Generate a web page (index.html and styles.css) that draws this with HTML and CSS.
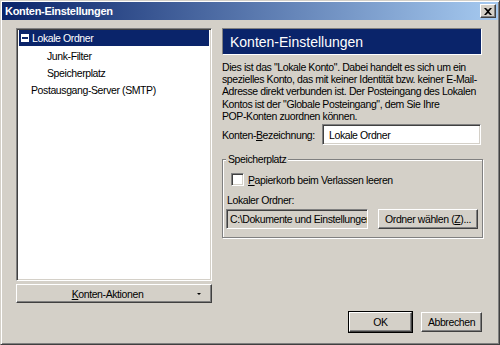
FILE: index.html
```html
<!DOCTYPE html>
<html lang="de">

<head>
    <meta charset="UTF-8">
    <title>Konten-Einstellungen</title>
    <link rel="stylesheet" href="styles.css">
</head>

<body>
    <div class="window">
        <div class="titlebar">
            <span class="title">Konten-Einstellungen</span>
            <span class="close-btn">
                <svg width="8" height="7" viewBox="0 0 8 7">
                    <path d="M0 0h2l2 2 2-2h2L5 3.5 8 7H6L4 5 2 7H0l3-3.5z" fill="#000"/>
                </svg>
            </span>
        </div>
        <div class="main">
            <div class="left-col">
                <div class="tree">
                    <div class="tree-row selected">
                        <span class="toggle"></span>
                        <span class="row-label">Lokale Ordner</span>
                    </div>
                    <div class="tree-row child">Junk-Filter</div>
                    <div class="tree-row child">Speicherplatz</div>
                    <div class="tree-row top">Postausgang-Server (SMTP)</div>
                </div>
                <button class="btn actions-btn">
                    <span class="actions-text"><u>K</u>onten-Aktionen</span>
                    <span class="arrow"></span>
                </button>
            </div>
            <div class="right-col">
                <div class="page-header">Konten-Einstellungen</div>
                <p class="description">
                    Dies ist das "Lokale Konto". Dabei handelt es sich um ein<br>
                    spezielles Konto, das mit keiner Identität bzw. keiner E-Mail-<br>
                    Adresse direkt verbunden ist. Der Posteingang des Lokalen<br>
                    Kontos ist der "Globale Posteingang", dem Sie Ihre<br>
                    POP-Konten zuordnen können.
                </p>
                <div class="name-row">
                    <label class="name-label">Konten-<u>B</u>ezeichnung:</label>
                    <div class="textbox">Lokale Ordner</div>
                </div>
                <fieldset class="group">
                    <legend>Speicherplatz</legend>
                    <div class="check-row">
                        <span class="checkbox"></span>
                        <span><u>P</u>apierkorb beim Verlassen leeren</span>
                    </div>
                    <div class="folder-label">Lokaler Ordner:</div>
                    <div class="folder-row">
                        <div class="path-field">C:\Dokumente und Einstellungen\Benutzer</div>
                        <button class="btn folder-btn">Ordner wählen (<u>Z</u>)...</button>
                    </div>
                </fieldset>
                <div class="dialog-buttons">
                    <button class="btn ok-btn">OK</button>
                    <button class="btn cancel-btn">Abbrechen</button>
                </div>
            </div>
        </div>
    </div>
</body>

</html>
```

FILE: styles.css
```css
body {
    margin: 0;
    font-family: "Liberation Sans", Arial, sans-serif;
    font-size: 10.5px;
    letter-spacing: -0.4px;
    color: #000;
    background: #d4d0c8;
}

.window {
    width: 500px;
    height: 345px;
    box-sizing: border-box;
    background: #d4d0c8;
    border: 1px solid #d4d0c8;
    border-right-color: #404040;
    border-bottom-color: #404040;
    box-shadow: inset 1px 1px #fff, inset -1px -1px #808080;
}

.titlebar {
    margin: 1px;
    height: 18px;
    display: flex;
    align-items: center;
    justify-content: space-between;
    padding: 0 2px 0 3px;
    background: linear-gradient(to right, #0a246a, #a6caf0);
}

.title {
    color: #fff;
    font-weight: bold;
    font-size: 11px;
    letter-spacing: -0.3px;
}

.close-btn {
    width: 16px;
    height: 14px;
    box-sizing: border-box;
    display: flex;
    align-items: center;
    justify-content: center;
    background: #d4d0c8;
    border: 1px solid #fff;
    border-right-color: #404040;
    border-bottom-color: #404040;
    box-shadow: inset -1px -1px #808080;
}

.main {
    display: flex;
    padding: 7px 0 0 15px;
}

.left-col {
    width: 196px;
    display: flex;
    flex-direction: column;
}

.tree {
    height: 253px;
    box-sizing: border-box;
    background: #fff;
    border: 1px solid #808080;
    border-right-color: #fff;
    border-bottom-color: #fff;
    box-shadow: inset 1px 1px #404040, inset -1px -1px #d4d0c8;
    padding: 1px 2px 0 2px;
}

.tree-row {
    height: 17px;
    display: flex;
    align-items: center;
    white-space: nowrap;
}

.tree-row.selected {
    background: #0a246a;
    color: #fff;
    height: 16px;
    margin-bottom: 1px;
}

.tree-row.child {
    padding-left: 28px;
}

.tree-row.top {
    padding-left: 12px;
}

.toggle {
    width: 8px;
    height: 8px;
    box-sizing: border-box;
    margin: 0 3px 0 2px;
    background: #fff;
    position: relative;
}

.toggle::after {
    content: "";
    position: absolute;
    left: 1px;
    top: 3px;
    width: 6px;
    height: 2px;
    background: #0a246a;
}

.btn {
    font-family: "Liberation Sans", Arial, sans-serif;
    font-size: 10.5px;
    letter-spacing: -0.4px;
    color: #000;
    background: #d4d0c8;
    border: 1px solid #fff;
    border-right-color: #404040;
    border-bottom-color: #404040;
    box-shadow: inset -1px -1px #808080;
    padding: 0;
    height: 20px;
    white-space: nowrap;
}

.actions-btn {
    margin-top: 3px;
    height: 19px;
    display: flex;
    align-items: center;
}

.actions-text {
    flex: 1;
    text-align: center;
    padding-left: 1px;
}

.arrow {
    width: 0;
    height: 0;
    margin-right: 10px;
    border-left: 2px solid transparent;
    border-right: 2px solid transparent;
    border-top: 2px solid #000;
}

.right-col {
    width: 261px;
    height: 304px;
    margin-left: 10px;
    display: flex;
    flex-direction: column;
}

.page-header {
    width: 260px;
    height: 27px;
    box-sizing: border-box;
    background: #0a246a;
    color: #fff;
    font-size: 14px;
    letter-spacing: 0;
    padding: 0 7px;
    display: flex;
    align-items: center;
    border: 1px solid #808080;
    border-right-color: #fff;
    border-bottom-color: #fff;
}

.description {
    margin: 6px 0 0;
    line-height: 12.2px;
    white-space: nowrap;
}

.name-row {
    display: flex;
    align-items: center;
    margin-top: 2px;
    white-space: nowrap;
}

.name-label {
    width: 100px;
}

.textbox {
    width: 159px;
    height: 21px;
    box-sizing: border-box;
    background: #fff;
    border: 1px solid #808080;
    border-right-color: #fff;
    border-bottom-color: #fff;
    box-shadow: inset 1px 1px #404040, inset -1px -1px #d4d0c8;
    padding: 0 6px;
    display: flex;
    align-items: center;
}

.group {
    margin: 8px 0 0;
    padding: 0 4px 8px 3px;
    width: 261px;
    box-sizing: border-box;
    border: 1px solid #808080;
    box-shadow: inset 1px 1px #fff, 1px 1px #fff;
}

.group legend {
    padding: 0 2px;
    margin-left: 0;
    background: #d4d0c8;
    line-height: 12px;
}

.check-row {
    display: flex;
    align-items: center;
    gap: 4px;
    margin: 8px 0 0 5px;
    white-space: nowrap;
}

.checkbox {
    width: 13px;
    height: 13px;
    box-sizing: border-box;
    background: #fff;
    border: 1px solid #808080;
    border-right-color: #fff;
    border-bottom-color: #fff;
    box-shadow: inset 1px 1px #404040, inset -1px -1px #d4d0c8;
}

.folder-label {
    margin-top: 8px;
    line-height: 13px;
    padding-left: 1px;
}

.folder-row {
    display: flex;
    gap: 10px;
    margin-top: 2px;
}

.path-field {
    width: 142px;
    height: 20px;
    box-sizing: border-box;
    overflow: hidden;
    white-space: nowrap;
    border: 1px solid #808080;
    border-right-color: #fff;
    border-bottom-color: #fff;
    box-shadow: inset 1px 1px #404040, inset -1px -1px #d4d0c8;
    padding: 0 3px;
    display: flex;
    align-items: center;
}

.folder-btn {
    width: 100px;
}

.dialog-buttons {
    margin-top: auto;
    display: flex;
    justify-content: flex-end;
    gap: 9px;
    padding-right: 1px;
}

.ok-btn {
    width: 63px;
    outline: 1px solid #000;
}

.cancel-btn {
    width: 61px;
}
```
